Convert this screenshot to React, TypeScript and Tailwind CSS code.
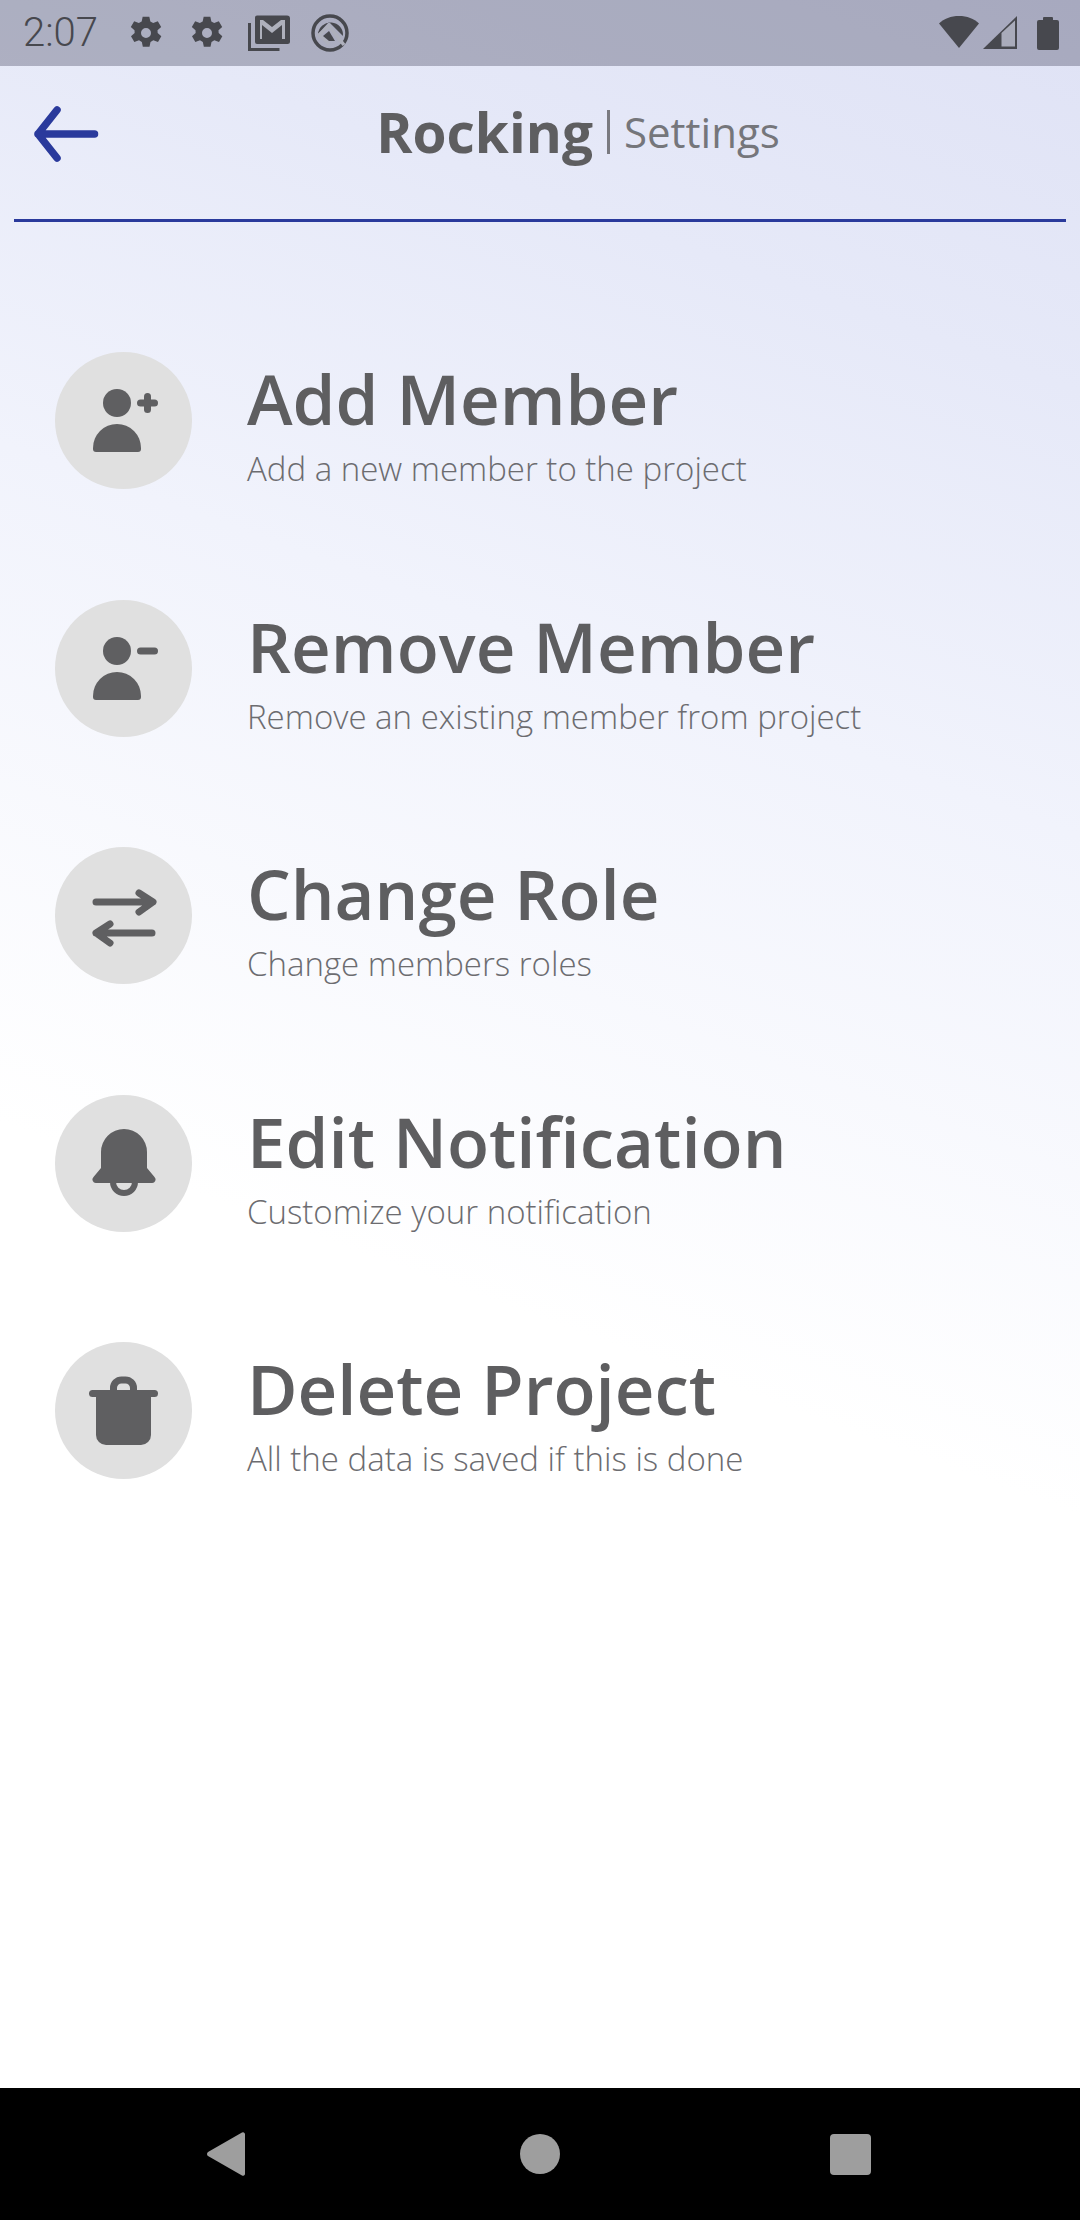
const F = "font-['Open_Sans',sans-serif]";

function Gear() {
  return (
    <svg viewBox="0 0 24 24" className="w-[40px] h-[40px]" fill="#47484e">
      <path fillRule="evenodd" d="M10 2.200h4l.6 2.900 1.700.9 2.800-1 2 3.400-2.200 2 .1 1.600 2.200 2-2 3.400-2.800-1-1.700 1-.6 2.800h-4l-.6-2.800-1.700-1-2.800 1-2-3.400 2.200-2-.1-1.600-2.200-2 2-3.400 2.800 1 1.700-.9zM12 9a3 3 0 1 0 0 6 3 3 0 0 0 0-6z" />
    </svg>
  );
}

function StatusBar() {
  return (
    <div className="h-[66px] bg-[#00001a]/25 flex items-center justify-between pl-[23px] pr-[21px] shrink-0">
      <div className="flex items-center">
        <span className="font-['Roboto',sans-serif] text-[40px] leading-[40px] text-[#47484e] font-light w-[103px]">2:07</span>
        <Gear />
        <span className="w-[21px]" />
        <Gear />
        <svg viewBox="0 0 42 36" className="w-[42px] h-[36px] ml-[21px]">
          <path d="M7 2.500a2 2 0 0 1 2-2h30a3 3 0 0 1 3 3v23a2.500 2.500 0 0 1-2.500 2.500H9a2 2 0 0 1-2-2z" fill="#47484e" />
          <path d="M12 5h3l9 7 9-7h4v19h-3V10l-10 8-10-8v14h-2z" fill="#aeb0bc" />
          <path d="M1.500 8v26.500h30" fill="none" stroke="#47484e" strokeWidth="3" />
        </svg>
        <svg viewBox="0 0 38 38" className="w-[38px] h-[38px] ml-[21px]">
          <circle cx="19" cy="19" r="17" strokeWidth="3.500" fill="none" stroke="#47484e" />
          <path d="M7 20A12.500 12.500 0 0 1 32 22L18 8z" fill="#47484e" />
          <path d="M33 31L18 12 8.300 21l10 9" fill="none" stroke="#aeb0bc" strokeWidth="3.500" />
          <path d="M18 17l-6 5 6 5h6z" fill="#47484e" />
        </svg>
      </div>
      <div className="flex items-center">
        <svg viewBox="0 0 42 36" className="w-[42px] h-[36px]">
          <path d="M1 8.500C6 3.500 13 1 21 1s15 2.500 20 7.500L21 33z" fill="#47484e" />
        </svg>
        <svg viewBox="0 0 34 36" className="w-[34px] h-[36px] ml-[3px]">
          <path d="M34 1v33H0z" fill="#47484e" />
          <path d="M18.500 18L32 5.500v26H18.500z" fill="#a9abba" />
        </svg>
        <svg viewBox="0 0 22 36" className="w-[22px] h-[36px] ml-[20px]">
          <path d="M6 3a1 1 0 0 1 1-1h8a1 1 0 0 1 1 1v2h4a2 2 0 0 1 2 2v26a2 2 0 0 1-2 2H2a2 2 0 0 1-2-2V7a2 2 0 0 1 2-2h4z" fill="#47484e" />
        </svg>
      </div>
    </div>
  );
}

function Header() {
  return (
    <div className="h-[156px] mx-[14px] border-b-[3px] border-[#2a3a9c] relative flex items-center justify-center shrink-0 pb-[22px]">
      <svg viewBox="0 0 66 58" className="absolute left-[19px] top-[40px] w-[66px] h-[58px]" fill="none" stroke="#2a3a9c" strokeWidth="7.500" strokeLinecap="round" strokeLinejoin="round">
        <path d="M61.500 28H5M24 4L5 28l19 24" />
      </svg>
      <div className={`${F} flex items-center ml-[76px]`}>
        <span className="text-[55px] leading-[66px] font-bold text-[#5e5e60]">Rocking</span>
        <span className="w-[3px] h-[44px] bg-[#7a7a80] mx-[14px]" />
        <span className="text-[42px] leading-[66px] font-normal text-[#75767b]">Settings</span>
      </div>
    </div>
  );
}

function AddIcon({ minus }: { minus?: boolean }) {
  return (
    <svg viewBox="0 0 137 137" className="w-[137px] h-[137px]" fill="#5f5f61">
      <circle cx="62" cy="51" r="14" />
      <path d="M38 97v-1a24 24 0 0 1 48 0v1a3 3 0 0 1-3 3H41a3 3 0 0 1-3-3z" />
      <path d="M85.500 51h14" stroke="#5f5f61" strokeWidth="7" strokeLinecap="round" />
      {!minus && <path d="M92.500 44.500v13" stroke="#5f5f61" strokeWidth="7" strokeLinecap="round" />}
    </svg>
  );
}

function SwapIcon() {
  return (
    <svg viewBox="0 0 137 137" className="w-[137px] h-[137px]" fill="none" stroke="#5f5f61" strokeWidth="7" strokeLinecap="round" strokeLinejoin="round">
      <path d="M41 55h56M84 46l14 9-14 10" />
      <path d="M97 86H41M55 77l-14 9 14 10" />
    </svg>
  );
}

function BellIcon() {
  return (
    <svg viewBox="0 0 137 137" className="w-[137px] h-[137px]" fill="#5f5f61">
      <path d="M46 57a23 23 0 0 1 46 0v16l7.500 9a3.500 3.500 0 0 1-3 6H41.500a3.500 3.500 0 0 1-3-6l7.500-9z" />
      <path d="M58 87a11 11 0 0 0 22 0" fill="none" stroke="#5f5f61" strokeWidth="6" />
    </svg>
  );
}

function TrashIcon() {
  return (
    <svg viewBox="0 0 137 137" className="w-[137px] h-[137px]" fill="#5f5f61">
      <path d="M58.500 50v-4a8 8 0 0 1 8-8h4a8 8 0 0 1 8 8v4" fill="none" stroke="#5f5f61" strokeWidth="7" />
      <rect x="34" y="48" width="69" height="7" rx="3.500" />
      <path d="M41 52h55v41a10 10 0 0 1-10 10H51a10 10 0 0 1-10-10z" />
    </svg>
  );
}

const items = [
  { t: "Add Member", s: "Add a new member to the project", i: <AddIcon /> },
  { t: "Remove Member", s: "Remove an existing member from project", i: <AddIcon minus /> },
  { t: "Change Role", s: "Change members roles", i: <SwapIcon /> },
  { t: "Edit Notification", s: "Customize your notification", i: <BellIcon /> },
  { t: "Delete Project", s: "All the data is saved if this is done", i: <TrashIcon /> },
];

function Row({ t, s, i }: { t: string; s: string; i: React.ReactNode }) {
  return (
    <div className="flex items-center h-[137px]">
      <div className="w-[137px] h-[137px] rounded-full bg-[#e0e0e0] shrink-0">{i}</div>
      <div className={`${F} ml-[55px] pt-[11px]`}>
        <div className="text-[69px] leading-[80px] font-semibold text-[#5e5e60]">{t}</div>
        <div className="text-[33px] leading-[50px] font-light text-[#6c6c70] mt-[6px]">{s}</div>
      </div>
    </div>
  );
}

export default function App() {
  return (
    <div className="w-[1080px] h-[2220px] flex flex-col overflow-hidden bg-[linear-gradient(200deg,#dfe2f5_0%,#e6e9f8_15%,#f1f3fc_32%,#ffffff_58%,#ffffff_100%)]">
      <StatusBar />
      <Header />
      <div className="flex-1 flex flex-col gap-[110.500px] pl-[55px] pt-[130px]">
        {items.map((x) => (
          <Row key={x.t} {...x} />
        ))}
      </div>
      <div className="h-[132px] bg-black shrink-0 flex items-center">
        <svg viewBox="0 0 40 46" className="w-[40px] h-[46px] ml-[206px]"><path d="M36 1.500a2 2 0 0 1 3 1.500v40a2 2 0 0 1-3 1.500L2 25a2.500 2.500 0 0 1 0-4z" fill="#9e9e9e" /></svg>
        <span className="w-[40px] h-[40px] rounded-full bg-[#9e9e9e] ml-[274px]" />
        <span className="w-[41px] h-[41px] rounded-[4px] bg-[#9e9e9e] ml-[270px]" />
      </div>
    </div>
  );
}
